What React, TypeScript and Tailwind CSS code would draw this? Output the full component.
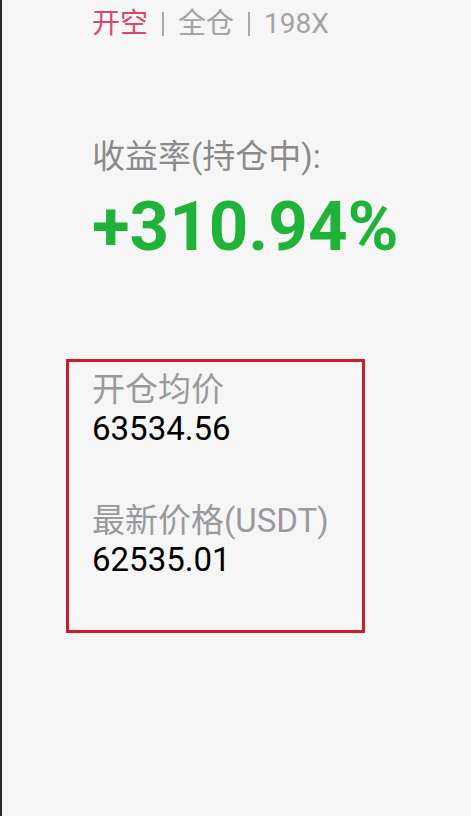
import React from 'react';

const font = { fontFamily: 'Roboto, "Noto Sans CJK SC", sans-serif' };

const App: React.FC = () => {
  return (
    <div
      className="w-[471px] h-[816px] bg-[#f6f6f6] border-l-2 border-[#2a2a2a] overflow-hidden"
      style={font}
    >
      <div className="pl-[90px] pt-[6px] flex items-center text-[28px] leading-[36px] text-[#a3a3a3]">
        <span className="text-[#d9466e]">开空</span>
        <span className="mx-[14px] w-[2px] h-[24px] bg-[#a8a8a8]" />
        <span>全仓</span>
        <span className="mx-[14px] w-[2px] h-[24px] bg-[#a8a8a8]" />
        <span>198X</span>
      </div>

      <div className="pl-[90px] mt-[93px]">
        <div className="text-[33px] leading-[44px] text-[#8a8a8a]">收益率(持仓中):</div>
        <div className="mt-[10px] text-[69px] leading-[76px] font-bold text-[#1fb33a]">+310.94%</div>
      </div>

      <div className="ml-[64px] mt-[94px] w-[299px] h-[274px] border-[3px] border-[#c41f2a] pl-[23px] pt-[8px]">
        <div className="text-[33px] leading-[40px] text-[#9a9a9a]">开仓均价</div>
        <div className="text-[33px] leading-[38px] text-black">63534.56</div>
        <div className="mt-[53px] text-[33px] leading-[40px] text-[#9a9a9a]">最新价格(USDT)</div>
        <div className="text-[33px] leading-[38px] text-black">62535.01</div>
      </div>
    </div>
  );
};

export default App;
